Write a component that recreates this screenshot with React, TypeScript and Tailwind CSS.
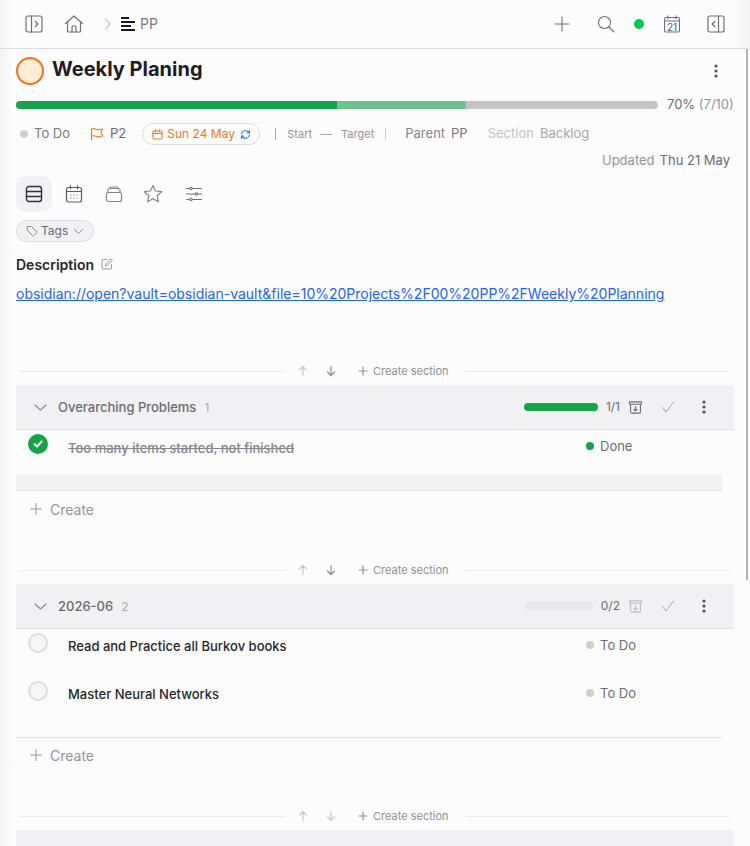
import React from "react";

const I = ({ children, s = 20, c = "#6b6b76", w = 1.5, v = 24 }: { children: React.ReactNode; s?: number; c?: string; w?: number; v?: number }) => (
  <svg width={s} height={s} viewBox={`0 0 ${v} ${v}`} fill="none" stroke={c} strokeWidth={w} strokeLinecap="round" strokeLinejoin="round" className="shrink-0">
    {children}
  </svg>
);

const Dots = ({ c = "#52525b" }: { c?: string }) => (
  <svg width="4" height="14" viewBox="0 0 4 14" className="shrink-0">
    <circle cx="2" cy="2" r="1.6" fill={c} />
    <circle cx="2" cy="7" r="1.6" fill={c} />
    <circle cx="2" cy="12" r="1.6" fill={c} />
  </svg>
);

const Archive = ({ c }: { c: string }) => (
  <I s={15} c={c} w={1.2} v={16}>
    <rect x="1.5" y="2" width="13" height="2.5" rx="0.7" />
    <path d="M2.7 4.500v8a1.500 1.500 0 0 0 1.500 1.500h7.600a1.500 1.500 0 0 0 1.500-1.500v-8" />
    <path d="M8 7v4.500M6.300 10 8 11.700 9.700 10" />
  </I>
);

const Divider = ({ downFaint }: { downFaint?: boolean }) => (
  <div className="flex h-[14px] items-center pl-1 pr-1">
    <div className="h-px w-[265px] bg-[#e9e9ed]" />
    <div className="ml-[12px] flex w-[40px] items-center justify-between">
      <I s={12} c="#c9c9cf" w={1.2} v={12}><path d="M6 10.500v-9M2.500 5 6 1.500 9.500 5" /></I>
      <I s={12} c={downFaint ? "#c9c9cf" : "#8a8a93"} w={1.2} v={12}><path d="M6 1.500v9M2.500 7 6 10.500 9.500 7" /></I>
    </div>
    <div className="ml-[21px] flex items-center gap-[5px] text-[11px] text-[#8f8f98]">
      <I s={10} c="#8f8f98" w={1.2} v={10}><path d="M5 1v8M1 5h8" /></I>
      <span className="pt-[1px]">Create section</span>
    </div>
    <div className="ml-4 h-px flex-1 bg-[#e9e9ed]" />
  </div>
);

const SectionHead = ({ name, count, bar, frac, archive }: { name: string; count: string; bar: React.ReactNode; frac: string; archive: string }) => (
  <div className="flex h-[45px] items-center border-b border-[#dfdfe5] bg-[#f1f0f3] pl-[18px] pr-[28px]">
    <I s={13} c="#85858e" w={1.1} v={13}><path d="M1 4l5.500 5L12 4" /></I>
    <span className="ml-[11px] pt-[1px] text-[13px] font-medium text-[#6b6b75]">{name}</span>
    <span className="ml-[8px] pt-[1px] text-[12px] text-[#a9a9b1]">{count}</span>
    <div className="flex-1" />
    {bar}
    <span className="ml-[8px] text-[12px] leading-none text-[#6b6b75] whitespace-nowrap">{frac}</span>
    <div className="ml-[8px]"><Archive c={archive} /></div>
    <div className="ml-[18px]"><I s={14} c="#a6a6ae" w={1} v={14}><path d="M1.500 7.500 5 12 12.500 2" /></I></div>
    <div className="ml-[27px]"><Dots /></div>
  </div>
);

const Row = ({ title, done, h, status }: { title: string; done?: boolean; h: string; status: string }) => (
  <div className={`flex ${h} items-start`}>
    <div className="ml-[12px] mt-[4px]">
      {done ? (
        <div className="flex h-5 w-5 items-center justify-center rounded-full bg-[#16a34a]">
          <I s={12} c="#ffffff" w={2} v={12}><path d="M2.500 6.300 5 8.600l4.500-5" /></I>
        </div>
      ) : (
        <div className="h-5 w-5 rounded-full border-2 border-[#dcdce3] bg-[#f6f6f9]" />
      )}
    </div>
    <span className={`ml-[20px] text-[13px] leading-[18px] font-medium ${done ? "mt-[9px] text-[#85858e] line-through" : "mt-[8px] text-[#27272a]"}`}>{title}</span>
    <div className="flex-1" />
    <div className="mt-[7px] flex w-[148px] items-center">
      <span className={`h-[8px] w-[8px] rounded-full ${status === "Done" ? "bg-[#16a34a]" : "bg-[#cfcfd4]"}`} />
      <span className="ml-[6px] text-[13px] leading-[18px] text-[#6b6b75]">{status}</span>
    </div>
  </div>
);

const Create = ({ up }: { up?: boolean }) => (
  <div className={`mr-[12px] flex h-[38px] items-center border-t border-[#e2e2e7] pl-[14px] ${up ? "pb-[3px]" : "pb-[1px]"}`}>
    <I s={12} c="#9b9ba3" w={1.1} v={12}><path d="M6 .5v11M.5 6h11" /></I>
    <span className="ml-[8px] text-[14px] text-[#94949c]">Create</span>
  </div>
);

export default function App() {
  return (
    <div className="relative h-[846px] w-[750px] overflow-hidden bg-[#fcfcfd] font-['Inter',sans-serif]">
      <div className="absolute inset-y-0 left-0 w-[14px] bg-gradient-to-r from-[#f3f3f5] to-transparent" />
      <div className="absolute right-0 top-0 h-[48px] w-[14px] bg-gradient-to-l from-[#f3f3f5] to-transparent" />
      <div className="absolute right-[2px] top-[49px] h-[531px] w-[2px] bg-[#b4b4b6]" />

      <header className="relative flex h-[49px] items-center border-b border-[#dcdce4] pb-[1px] pl-[25px] pr-[25px]">
        <I s={18} c="#6f6f7a" w={1.2} v={18}>
          <rect x="1" y="1" width="16" height="16" rx="2" />
          <path d="M6.500 1v16M10.300 6.500 12.800 9l-2.500 2.500" />
        </I>
        <div className="ml-[21px]">
          <I s={20} c="#6f6f7a" w={1.2} v={20}>
            <path d="M1.500 9.500 10 2l8.500 7.500M3.500 8v9a1 1 0 0 0 1 1h11a1 1 0 0 0 1-1V8" />
            <path d="M8 18v-5a1 1 0 0 1 1-1h2a1 1 0 0 1 1 1v5" />
          </I>
        </div>
        <div className="ml-[20px]">
          <I s={10} c="#a6a6ae" w={1} v={10}><path d="M2.500 0.500 7.500 5l-5 4.500" transform="translate(-1 0)" /></I>
        </div>
        <div className="ml-[7px] flex flex-col gap-[2px]">
          <div className="h-[2px] w-[8px] bg-[#18181f]" />
          <div className="h-[2px] w-[14px] bg-[#18181f]" />
          <div className="h-[2px] w-[10px] bg-[#18181f]" />
          <div className="h-[2px] w-[14px] bg-[#18181f]" />
        </div>
        <span className="ml-[5px] text-[14px] text-[#777780]">PP</span>
        <div className="flex-1" />
        <I s={16} c="#6f6f7a" w={1.1} v={16}><path d="M8 1v14M1 8h14" /></I>
        <div className="ml-[27px]">
          <I s={18} c="#6f6f7a" w={1.1} v={18}><circle cx="7.500" cy="7.500" r="6" /><path d="m12 12 5 5" /></I>
        </div>
        <span className="ml-[19px] h-[10px] w-[10px] rounded-full bg-[#00c853]" />
        <div className="ml-[19px] relative">
          <I s={18} c="#6f6f7a" w={1.1} v={18}>
            <rect x="1.500" y="2.500" width="15" height="14.500" rx="1.500" />
            <path d="M1.500 6h15M5 .8v3M13 .8v3" />
          </I>
          <span className="absolute left-[4px] top-[6px] text-[10px] leading-[12px] text-[#5c5c66]">21</span>
        </div>
        <div className="ml-[26px]">
          <I s={18} c="#6f6f7a" w={1.2} v={18}>
            <rect x="1" y="1" width="16" height="16" rx="2" />
            <path d="M11.500 1v16M7.700 6.500 5.200 9l2.500 2.500" />
          </I>
        </div>
      </header>

      <main className="relative pl-[16px] pr-[16px]">
        <div className="flex h-[40px] items-start pt-[8px]">
          <div className="h-[28px] w-[28px] rounded-full border-2 border-[#f97316] bg-[#ffedd5]" />
          <h1 className="ml-[8px] text-[20px] font-bold leading-[24px] text-[#1d1d24]">Weekly Planing</h1>
          <div className="flex-1" />
          <div className="mr-[16px] mt-[7px]"><Dots /></div>
        </div>

        <div className="mt-[12px] flex h-[8px] items-center">
          <div className="flex h-[8px] w-[642px] overflow-hidden rounded-full bg-[#c4c3c8]">
            <div className="h-full w-[321px] bg-[#16a34a]" />
            <div className="h-full w-[129px] bg-[#6dc28e]" />
          </div>
          <span className="ml-[9px] text-[13px] text-[#6b6b75] whitespace-nowrap">70% <span className="text-[#94949c]">(7/10)</span></span>
        </div>

        <div className="mt-[13px] flex h-[24px] items-center pl-[4px]">
          <span className="h-[8px] w-[8px] rounded-full bg-[#cfcfd4]" />
          <span className="ml-[6px] text-[13px] text-[#777780]">To Do</span>
          <div className="ml-[20px]">
            <I s={14} c="#f97316" w={1.1} v={14}><path d="M1.500 13V2c3-1.400 4.200.6 5.500.7 1.600.1 3-.7 5.500-.7L11 5.500l1.500 3.500c-2.500 0-4 .8-5.500.7C5.700 9.600 4.500 7.900 1.500 9" /></I>
          </div>
          <span className="ml-[6px] text-[13px] text-[#6b6b75]">P2</span>
          <div className="ml-[16px] flex h-[22px] w-[118px] items-center rounded-full border border-[#dcdce4] pl-[9px]">
            <I s={11} c="#ea7a14" w={1.1} v={11}><rect x="1" y="2" width="9" height="8" rx="1" /><path d="M1 4.500h9M3.500 .8v2M7.500 .8v2" /></I>
            <span className="ml-[4px] text-[12px] text-[#ea7a14]">Sun 24 May</span>
            <div className="ml-[5px]">
              <I s={11} c="#3b82f6" w={1.2} v={11}><path d="M1.500 5a4 4 0 0 1 7-2l1 1M9.500 1.500V4H7M9.500 6a4 4 0 0 1-7 2l-1-1M1.500 9.500V7H4" /></I>
            </div>
          </div>
          <span className="ml-[15px] h-[12px] w-px bg-[#a9a9b1]" />
          <span className="ml-[11px] text-[11px] text-[#94949c]">Start</span>
          <span className="ml-[8px] h-px w-[12px] bg-[#a9a9b1]" />
          <span className="ml-[9px] text-[11px] text-[#94949c]">Target</span>
          <span className="ml-[11px] h-[12px] w-px bg-[#c9c9cf]" />
          <span className="ml-[19px] text-[13px] text-[#85858e]">Parent</span>
          <span className="ml-[6px] text-[13px] text-[#777780]">PP</span>
          <span className="ml-[20px] text-[13px] text-[#c3c3c9]">Section</span>
          <span className="ml-[6px] text-[13px] text-[#a6a6ae]">Backlog</span>
        </div>

        <div className="mt-[3px] flex h-[24px] items-center justify-end text-[13px]">
          <span className="text-[#94949c]">Updated</span>
          <span className="ml-[5px] text-[#6b6b75]">Thu 21 May</span>
          <span className="w-[4px]" />
        </div>

        <div className="mt-[3px] flex h-[36px] items-center">
          <div className="flex h-[36px] w-[36px] items-center justify-center rounded-[10px] bg-[#f1f0f3]">
            <I s={18} c="#33333b" w={1.4} v={18}>
              <rect x="1.500" y="1.500" width="15" height="15" rx="2.500" />
              <path d="M1.500 6.500h15M1.500 11.500h15" />
            </I>
          </div>
          <div className="ml-[13px]">
            <I s={18} c="#5c5c66" w={1.2} v={18}>
              <rect x="1.500" y="2.500" width="15" height="14.500" rx="2" />
              <path d="M1.500 6.500h15M5.500 .8v3M12.500 .8v3M6 10h.01M9 10h.01M12 10h.01M6 13h.01M9 13h.01M12 13h.01" />
            </I>
          </div>
          <div className="ml-[22px]">
            <I s={18} c="#85858e" w={1.2} v={18}>
              <rect x="1.500" y="7.500" width="15" height="9" rx="2" />
              <path d="M3 7.500V5a1.500 1.500 0 0 1 1.500-1.500h9A1.500 1.500 0 0 1 15 5v2.500" />
              <path d="M5 3.500V3a1 1 0 0 1 1-1h6a1 1 0 0 1 1 1v.5" />
            </I>
          </div>
          <div className="ml-[20px]">
            <I s={20} c="#85858e" w={1.2} v={20}><path d="M10 1.500 12.600 7l6 .7-4.400 4.100 1.200 6L10 14.800l-5.400 3 1.200-6L1.400 7.700l6-.7z" /></I>
          </div>
          <div className="ml-[22px]">
            <I s={18} c="#6f6f7a" w={1.1} v={18}>
              <path d="M1.500 3.500h15M1.500 9h15M1.500 14.500h15" />
              <circle cx="6" cy="3.500" r="1.200" fill="#fcfcfd" />
              <circle cx="11.500" cy="9" r="1.200" fill="#fcfcfd" />
              <circle cx="6" cy="14.500" r="1.200" fill="#fcfcfd" />
            </I>
          </div>
        </div>

        <div className="mt-[8px] flex h-[22px] w-[78px] items-center rounded-full border border-[#dcdce4] bg-[#f1f0f3] pl-[9px]">
          <I s={12} c="#85858e" w={1} v={12}><path d="M1.500 1.500h4l5 5a1 1 0 0 1 0 1.400l-2.600 2.600a1 1 0 0 1-1.400 0l-5-5z" /></I>
          <span className="ml-[3px] text-[12px] text-[#6b6b75]">Tags</span>
          <div className="ml-[6px]"><I s={9} c="#85858e" w={1} v={9}><path d="M.5 2.500 4.500 6.500l4-4" /></I></div>
        </div>

        <div className="mt-[12px] flex h-[20px] items-center">
          <span className="text-[14px] font-semibold text-[#27272a]">Description</span>
          <div className="ml-[7px]">
            <I s={12} c="#94949c" w={1} v={12}><path d="M10.500 6.500V10a1 1 0 0 1-1 1H2a1 1 0 0 1-1-1V2.500a1 1 0 0 1 1-1h3.500M4.500 7.500l.4-2 5-4.500 1.500 1.500-5 4.700z" /></I>
          </div>
        </div>

        <a className="mt-[10px] block h-[20px] text-[14px] leading-[20px] whitespace-nowrap text-[#2563eb] underline">obsidian://open?vault=obsidian-vault&amp;file=10%20Projects%2F00%20PP%2FWeekly%20Planning</a>

        <div className="mt-[60px]"><Divider /></div>
        <div className="mt-[7px]">
          <SectionHead
            name="Overarching Problems"
            count="1"
            bar={<div className="h-[8px] w-[74px] rounded-full bg-[#16a34a]" />}
            frac="1/1"
            archive="#6f6f7a"
          />
          <Row title="Too many items started, not finished" done h="h-[44px]" status="Done" />
          <div className="mr-[12px] h-[16px] bg-[#f1f0f3]" />
          <Create />
        </div>

        <div className="mt-[35px]"><Divider /></div>
        <div className="mt-[7px]">
          <SectionHead
            name="2026-06"
            count="2"
            bar={<div className="h-[8px] w-[69px] rounded-full bg-[#e8e8ea]" />}
            frac="0/2"
            archive="#bdbdc4"
          />
          <Row title="Read and Practice all Burkov books" h="h-[48px]" status="To Do" />
          <Row title="Master Neural Networks" h="h-[60px]" status="To Do" />
          <Create up />
        </div>

        <div className="mt-[34px]"><Divider downFaint /></div>
        <div className="mt-[7px] h-[45px] bg-[#f1f0f3]" />
      </main>
    </div>
  );
}
